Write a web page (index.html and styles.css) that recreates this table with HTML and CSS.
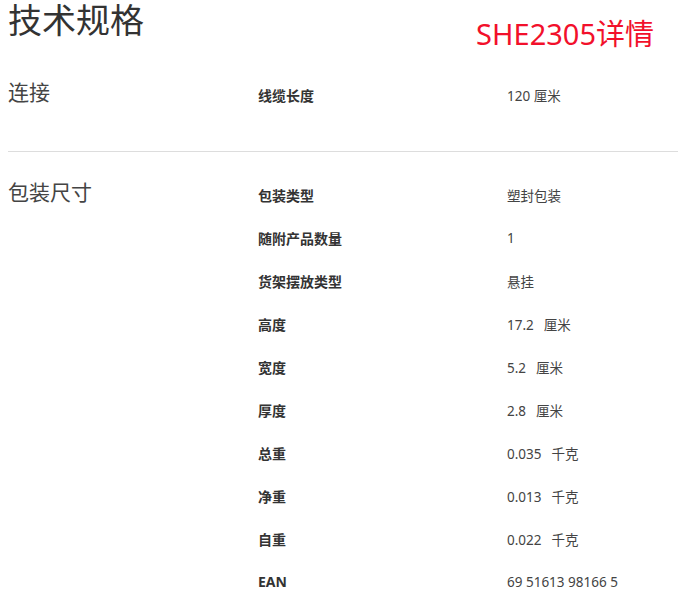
FILE: index.html
```html
<!DOCTYPE html>
<html lang="zh-CN">
<head>
<meta charset="utf-8">
<title>技术规格</title>
<link rel="stylesheet" href="styles.css">
</head>
<body>
<div class="page">
  <header class="header">
    <h1 class="title">技术规格</h1>
    <div class="stamp">SHE2305详情</div>
  </header>

  <section class="spec-section">
    <h2 class="section-title">连接</h2>
    <dl class="spec-list">
      <div class="spec-row"><dt>线缆长度</dt><dd>120 厘米</dd></div>
    </dl>
  </section>

  <section class="spec-section">
    <h2 class="section-title">包装尺寸</h2>
    <dl class="spec-list">
      <div class="spec-row"><dt>包装类型</dt><dd>塑封包装</dd></div>
      <div class="spec-row"><dt>随附产品数量</dt><dd>1</dd></div>
      <div class="spec-row"><dt>货架摆放类型</dt><dd>悬挂</dd></div>
      <div class="spec-row"><dt>高度</dt><dd>17.2<span class="gap"></span>厘米</dd></div>
      <div class="spec-row"><dt>宽度</dt><dd>5.2<span class="gap"></span>厘米</dd></div>
      <div class="spec-row"><dt>厚度</dt><dd>2.8<span class="gap"></span>厘米</dd></div>
      <div class="spec-row"><dt>总重</dt><dd>0.035<span class="gap"></span>千克</dd></div>
      <div class="spec-row"><dt>净重</dt><dd>0.013<span class="gap"></span>千克</dd></div>
      <div class="spec-row"><dt>自重</dt><dd>0.022<span class="gap"></span>千克</dd></div>
      <div class="spec-row"><dt>EAN</dt><dd>69 51613 98166 5</dd></div>
    </dl>
  </section>
</div>
</body>
</html>
```

FILE: styles.css
```css
html, body {
  margin: 0;
  padding: 0;
  background: #ffffff;
}

body {
  font-family: "Noto Sans", "Noto Sans CJK SC", sans-serif;
  color: #333333;
}

.page {
  height: 598px;
  overflow: hidden;
  padding-left: 8px;
}

.header {
  display: flex;
  justify-content: space-between;
  align-items: flex-start;
  height: 52px;
  padding-right: 24px;
}

.title {
  margin: 0;
  font-family: "Noto Sans CJK SC", sans-serif;
  font-size: 34px;
  font-weight: 400;
  line-height: 38px;
  color: #333333;
}

.stamp {
  margin-top: 14px;
  font-family: "Noto Sans", "Noto Sans CJK SC", sans-serif;
  font-size: 29px;
  line-height: 40px;
  color: #f2102b;
}

.spec-section {
  display: grid;
  grid-template-columns: 250px 1fr;
  padding: 21px 0 35px;
}

.spec-section + .spec-section {
  border-top: 1px solid #dddddd;
  padding-bottom: 0;
}

.section-title {
  margin: 0;
  font-family: "Noto Sans CJK SC", sans-serif;
  font-size: 21px;
  font-weight: 400;
  line-height: 36px;
  color: #444444;
}

.spec-list {
  margin: 0;
}

.spec-row {
  display: grid;
  grid-template-columns: 249px 1fr;
  height: 43px;
  align-items: center;
  font-size: 14px;
}

.spec-row dt {
  font-weight: 700;
  color: #333333;
}

.spec-row dd {
  margin: 0;
  font-size: 13.5px;
  color: #444444;
}

.gap {
  display: inline-block;
  width: 10px;
}
```
